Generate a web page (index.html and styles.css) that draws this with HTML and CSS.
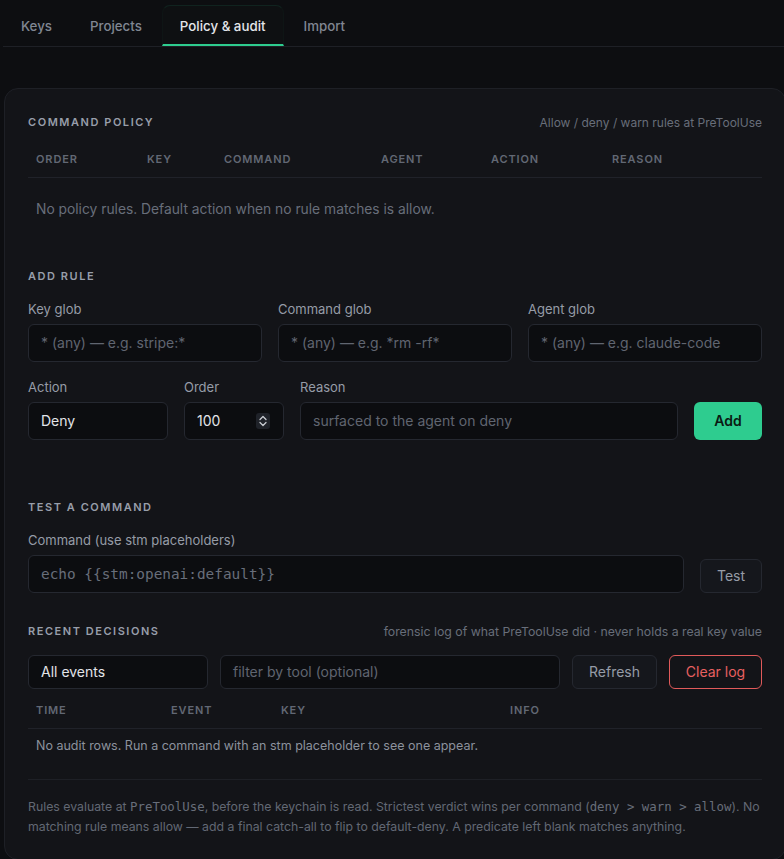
FILE: index.html
```html
<!DOCTYPE html>
<html lang="en">

<head>
    <meta charset="UTF-8">
    <title>Policy &amp; audit</title>
    <link rel="stylesheet" href="styles.css">
</head>

<body>
    <nav class="tabs">
        <div class="tab">Keys</div>
        <div class="tab">Projects</div>
        <div class="tab active">Policy &amp; audit</div>
        <div class="tab">Import</div>
    </nav>

    <div class="card">
        <!-- command policy -->
        <div class="head">
            <h3>Command policy</h3>
            <span class="note small">Allow / deny / warn rules at PreToolUse</span>
        </div>
        <div class="table policy">
            <div class="row th">
                <span>Order</span><span>Key</span><span>Command</span><span>Agent</span><span>Action</span><span>Reason</span>
            </div>
            <div class="empty big">No policy rules. Default action when no rule matches is allow.</div>
        </div>

        <!-- add rule -->
        <h3 class="sec addrule">Add rule</h3>
        <div class="grid3">
            <div class="field">
                <label>Key glob</label>
                <div class="input ph">* (any) — e.g. stripe:*</div>
            </div>
            <div class="field">
                <label>Command glob</label>
                <div class="input ph">* (any) — e.g. *rm -rf*</div>
            </div>
            <div class="field">
                <label>Agent glob</label>
                <div class="input ph">* (any) — e.g. claude-code</div>
            </div>
        </div>
        <div class="row2">
            <div class="field action">
                <label>Action</label>
                <div class="input val">Deny</div>
            </div>
            <div class="field order">
                <label>Order</label>
                <div class="input val num">
                    <span>100</span>
                    <svg class="spin" width="14" height="16" viewBox="0 0 14 16">
                        <rect x="0" y="0" width="14" height="16" rx="3" fill="#1f2229" />
                        <path d="M4 6.5 L7 3.5 L10 6.5" fill="none" stroke="#c9ccd2" stroke-width="1.3" stroke-linecap="round" stroke-linejoin="round" />
                        <path d="M4 9.5 L7 12.5 L10 9.5" fill="none" stroke="#c9ccd2" stroke-width="1.3" stroke-linecap="round" stroke-linejoin="round" />
                    </svg>
                </div>
            </div>
            <div class="field reason">
                <label>Reason</label>
                <div class="input ph">surfaced to the agent on deny</div>
            </div>
            <div class="btn add">Add</div>
        </div>

        <!-- test -->
        <h3 class="sec test">Test a command</h3>
        <div class="field cmd">
            <label>Command (use stm placeholders)</label>
        </div>
        <div class="testrow">
            <div class="input mono">echo {{stm:openai:default}}</div>
            <div class="btn ghost testbtn">Test</div>
        </div>

        <!-- recent decisions -->
        <div class="head recent">
            <h3>Recent decisions</h3>
            <span class="note">forensic log of what PreToolUse did · never holds a real key value</span>
        </div>
        <div class="controls">
            <div class="input val sel">All events</div>
            <div class="input ph filter">filter by tool (optional)</div>
            <div class="btn ghost refresh">Refresh</div>
            <div class="btn danger">Clear log</div>
        </div>
        <div class="table audit">
            <div class="row th">
                <span>Time</span><span>Event</span><span>Key</span><span>Info</span>
            </div>
            <div class="empty">No audit rows. Run a command with an stm placeholder to see one appear.</div>
        </div>

        <div class="foot">
            <p>Rules evaluate at <code>PreToolUse</code>, before the keychain is read. Strictest verdict wins per command (<code>deny &gt; warn &gt; allow</code>). No</p>
            <p>matching rule means allow — add a final catch-all to flip to default-deny. A predicate left blank matches anything.</p>
        </div>
    </div>
</body>

</html>
```

FILE: styles.css
```css
* {
    box-sizing: border-box;
    font-family: Inter, "Noto Sans", sans-serif;
}

body {
    margin: 0;
    background-color: rgb(13, 14, 17);
    color: rgb(156, 162, 173);
    overflow: hidden;
    width: 784px;
}

.tabs {
    display: flex;
    gap: 2px;
    margin-left: 3px;
    padding-top: 5px;
    border-bottom: 1px solid rgb(30, 32, 38);
}

.tab {
    padding: 0 17px;
    height: 41px;
    line-height: 40px;
    font-size: 13.3px;
    font-weight: 500;
    color: rgb(128, 134, 146);
    border: 1px solid transparent;
    border-radius: 8px 8px 0 0;
}

.tab.active {
    color: rgb(228, 230, 234);
    border-color: rgba(46, 204, 143, 0.1) rgba(46, 204, 143, 0.03) rgb(46, 204, 143);
    border-bottom-width: 2px;
    background-color: rgb(14, 16, 18);
}

.card {
    margin: 41px 0 0 4px;
    width: 782px;
    background-color: rgb(19, 20, 24);
    border: 1px solid rgb(30, 32, 38);
    border-radius: 14px;
    padding: 25px 23px 22px 23px;
}

.head {
    display: flex;
    justify-content: space-between;
    align-items: center;
    height: 16px;
}

h3 {
    margin: 0;
    font-size: 11px;
    line-height: 16px;
    font-weight: 600;
    text-transform: uppercase;
    letter-spacing: 0.14em;
    color: rgb(152, 158, 170);
}

.note {
    font-size: 12.3px;
    color: rgb(104, 110, 122);
}

.note.small {
    font-size: 12px;
}

.table {
    margin-top: 11px;
}

.row {
    display: grid;
}

.policy .row {
    grid-template-columns: 111px 77px 157px 110px 121px 1fr;
}

.audit .row {
    grid-template-columns: 135px 110px 229px 1fr;
}

.th {
    padding: 11px 8px;
    border-bottom: 1px solid rgb(32, 34, 41);
}

.th span {
    font-size: 11px;
    line-height: 14px;
    font-weight: 600;
    text-transform: uppercase;
    letter-spacing: 0.08em;
    color: rgb(98, 104, 116);
}

.empty {
    padding: 8px 8px;
    font-size: 12.5px;
    line-height: 18px;
    color: rgb(140, 146, 157);
}

.empty.big {
    padding: 21px 8px 22px;
    font-size: 13.8px;
    line-height: 20px;
    color: rgb(104, 110, 122);
}

.sec.addrule {
    margin-top: 27px;
}

.sec.test {
    margin-top: 59px;
}

.grid3 {
    display: grid;
    grid-template-columns: repeat(3, 1fr);
    gap: 16px;
    margin-top: 16px;
}

.field label {
    display: block;
    font-size: 13px;
    line-height: 18px;
    margin-bottom: 6px;
    color: rgb(150, 156, 167);
}

.field.cmd {
    margin-top: 16px;
}

.input {
    height: 38px;
    border: 1px solid rgb(37, 40, 48);
    border-radius: 6px;
    background-color: rgb(12, 13, 16);
    padding: 0 12px;
    font-size: 14px;
    line-height: 36px;
    white-space: nowrap;
    overflow: hidden;
}

.ph {
    color: rgb(96, 101, 112);
}

.val {
    color: rgb(226, 228, 232);
}

.row2 {
    display: flex;
    gap: 16px;
    align-items: flex-end;
    margin-top: 16px;
}

.action {
    width: 140px;
}

.order {
    width: 100px;
}

.reason {
    flex: 1;
}

.num {
    display: flex;
    align-items: center;
    justify-content: space-between;
    padding-right: 13px;
}

.spin {
    display: block;
}

.btn {
    border-radius: 6px;
    font-size: 14px;
    text-align: center;
    white-space: nowrap;
}

.add {
    width: 68px;
    height: 38px;
    line-height: 38px;
    background-color: rgb(46, 204, 143);
    color: rgb(10, 26, 19);
    font-weight: 600;
}

.testrow {
    display: flex;
    gap: 16px;
    align-items: flex-end;
}

.testrow .mono {
    flex: 1;
    font-family: "DejaVu Sans Mono", monospace;
    font-size: 14.4px;
    color: rgb(104, 110, 122);
}

.ghost {
    border: 1px solid rgb(37, 40, 48);
    background-color: rgb(21, 23, 28);
    color: rgb(150, 156, 167);
}

.testbtn {
    width: 62px;
    height: 34px;
    line-height: 32px;
}

.head.recent {
    margin-top: 30px;
}

.controls {
    display: flex;
    gap: 12px;
    margin-top: 16px;
}

.controls .input,
.controls .btn {
    height: 34px;
    line-height: 32px;
}

.sel {
    width: 180px;
}

.filter {
    width: 340px;
}

.refresh {
    width: 85px;
}

.danger {
    width: 93px;
    border: 1px solid rgb(224, 90, 90);
    color: rgb(232, 96, 96);
}

.audit {
    margin-top: 3px;
}

.foot {
    margin-top: 16px;
    padding-top: 17px;
    border-top: 1px solid rgb(30, 32, 38);
}

.foot p {
    margin: 0;
    font-size: 12.3px;
    line-height: 20px;
    white-space: nowrap;
    color: rgb(98, 104, 116);
}

.foot code {
    font-family: "DejaVu Sans Mono", monospace;
    font-size: 12.4px;
    color: rgb(104, 110, 122);
}
```
